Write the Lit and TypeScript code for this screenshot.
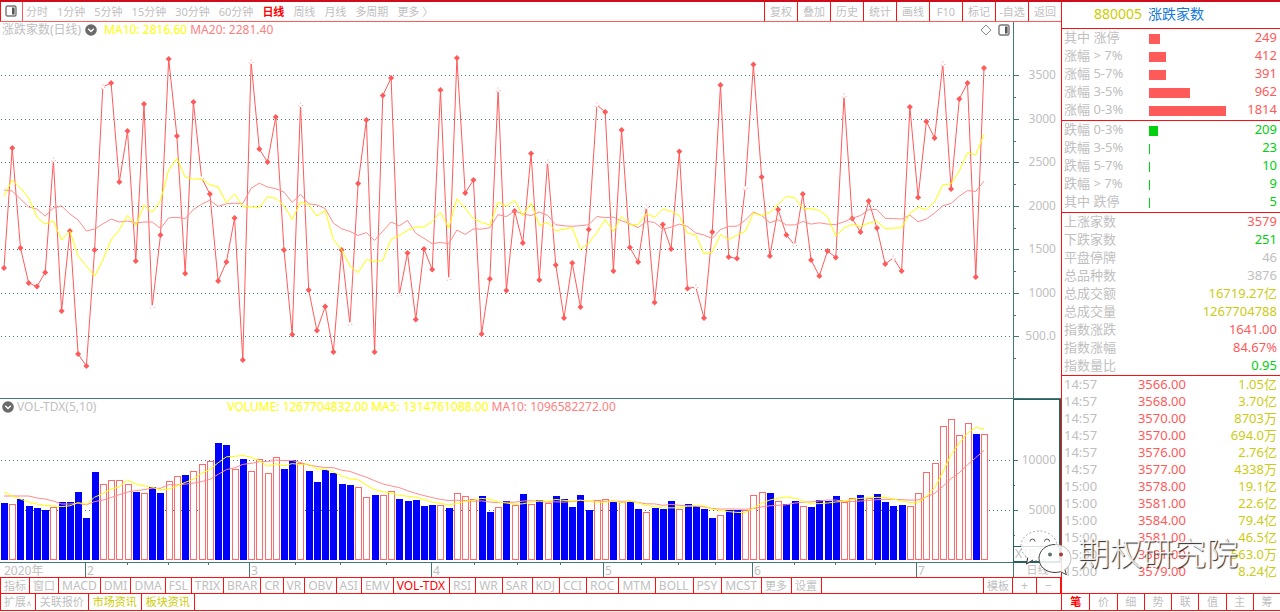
import { LitElement, html, svg, css } from "lit";
import { customElement, state } from "lit/decorators.js";
import { classMap } from "lit/directives/class-map.js";

const STEP = 980 / 119;
const px = (i: number) => 4 + i * STEP;

/* Closing positions of the advance/decline line, in plot units */
const LINE = [
  268, 148, 248, 283, 286.5, 272.5, 160, 311, 231, 354, 366, 250, 87, 83, 182, 131, 261, 104, 307, 235,
  59, 136, 273.5, 102, 178, 194, 281, 262, 218, 360, 62, 149, 162, 117, 250, 334.5, 105, 290, 330.5, 306.5,
  352, 250, 324, 183.5, 120, 352, 95.5, 78, 295, 253, 319.5, 249, 269.5, 90, 279, 58, 193, 180, 334, 279,
  90, 290.5, 211, 243, 153.5, 280, 162, 265, 318, 263, 307, 229.5, 105, 112, 271, 130, 247.5, 262, 207, 302.5,
  224.5, 249, 151.5, 288.5, 287, 318, 232, 85, 257, 258.5, 188, 64.5, 177, 256, 209.5, 235, 245, 194, 260, 276,
  251, 257.5, 96, 218.5, 232, 201, 228, 264, 258, 271, 107, 197.5, 121.5, 138, 64, 189, 99, 83, 277, 68,
];

/* Volume bars: top edge, r = rising day, b = falling day */
const VOLUME = (
  "503b 504r 499b 506b 508b 510b 507r 502b 502b 492b 518b 472b 484r 480r 480r 484r 492b 493r 487b 493b " +
  "481r 476r 475b 471r 464r 461r 443b 445b 469r 459b 471r 459r 473r 457r 469b 460b 463r 471b 482b 470b " +
  "473b 484b 485b 487r 497r 495b 495r 491r 499b 501b 500b 506b 505b 505r 508b 493r 496r 499r 496b 512b " +
  "507r 501b 505r 494b 504r 500b 503r 496b 499b 507b 495b 510b 500r 499r 502b 502r 502b 509b 512r 508b " +
  "509b 501b 509r 504b 506b 509b 518b 515r 510b 510b 510r 495r 492r 493b 501r 504b 501b 506r 507b 500b " +
  "501b 496b 502r 498r 495b 498r 494b 502b 506b 505b 506r 493r 472r 463r 426r 419r 435r 423r 434b 434r"
)
  .split(" ")
  .map((s) => ({ top: parseInt(s, 10), up: s.endsWith("r") }));

function average(data: number[], n: number, lead: number[]): string {
  return data
    .map((_, i) => {
      const y = i < n - 1 ? lead[i] : data.slice(i - n + 1, i + 1).reduce((a, b) => a + b, 0) / n;
      return `${px(i).toFixed(1)},${y.toFixed(1)}`;
    })
    .join(" ");
}

const MA10 = average(LINE, 10, [196, 180, 188, 198, 217, 224, 221, 240, 231]);
const MA20 = average(LINE, 20, [190, 191, 199, 207, 209, 216, 208, 206, 214, 220, 231, 229, 224, 219, 222, 221, 223, 222, 222]);
const TOPS = VOLUME.map((v) => v.top);
const VMA5 = average(TOPS, 5, [492, 496, 499, 502]);
const VMA10 = average(TOPS, 10, [496, 496, 496, 496, 498, 499, 501, 504, 504]);

const GRID = [75, 119, 162, 206, 249, 293, 336];
const GRID_LABELS = ["3500", "3000", "2500", "2000", "1500", "1000", "500.0"];
const MONTHS: [number, string][] = [[85, "2"], [249, "3"], [431, "4"], [603, "5"], [752, "6"], [916, "7"]];
const WEEKS = [127, 168, 208, 295, 340, 386, 474, 517, 560, 641, 678, 715, 794, 835, 875];

const PERIODS = ["分时", "1分钟", "5分钟", "15分钟", "30分钟", "60分钟", "日线", "周线", "月线", "多周期", "更多 〉"];
const ACTIONS = ["复权", "叠加", "历史", "统计", "画线", "F10", "标记", "-自选", "返回"];
const INDICATORS = [
  "指标", "窗口", "MACD", "DMI", "DMA", "FSL", "TRIX", "BRAR", "CR", "VR", "OBV", "ASI", "EMV",
];
const MORE_INDICATORS = ["VOL-TDX", "RSI", "WR", "SAR", "KDJ", "CCI", "ROC", "MTM", "BOLL", "PSY", "MCST", "更多", "设置"];
const RISES: [string, number][] = [["其中 涨停", 249], ["涨幅 > 7%", 412], ["涨幅 5-7%", 391], ["涨幅 3-5%", 962], ["涨幅 0-3%", 1814]];
const FALLS: [string, number][] = [["跌幅 0-3%", 209], ["跌幅 3-5%", 23], ["跌幅 5-7%", 10], ["跌幅 > 7%", 9], ["其中 跌停", 5]];
const SUMMARY = [
  ["上涨家数", "3579", "up"], ["下跌家数", "251", "down"], ["平盘停牌", "46", "flat"], ["总品种数", "3876", "flat"],
  ["总成交额", "16719.27亿", "amount"], ["总成交量", "1267704788", "amount"], ["指数涨跌", "1641.00", "up"],
  ["指数涨幅", "84.67%", "up"], ["指数量比", "0.95", "down"],
];
const TICKS = [
  ["14:57", "3566.00", "1.05亿"], ["14:57", "3568.00", "3.70亿"], ["14:57", "3570.00", "8703万"], ["14:57", "3570.00", "694.0万"],
  ["14:57", "3576.00", "2.76亿"], ["14:57", "3577.00", "4338万"], ["15:00", "3578.00", "19.1亿"], ["15:00", "3581.00", "22.6亿"],
  ["15:00", "3584.00", "79.4亿"], ["15:00", "3581.00", "46.5亿"], ["15:00", "3581.00", "563.0万"], ["15:00", "3579.00", "8.24亿"],
];
const SIDE_TABS = ["笔", "价", "细", "势", "联", "值", "主", "筹"];

const panelIcon = html`<svg width="12" height="12" viewBox="0 0 12 12" aria-hidden="true">
  <rect x="1" y="1" width="10" height="10" rx="1.5" fill="#fff" stroke="#777" stroke-width="1.4" />
  <rect x="7" y="2.5" width="2.6" height="7" fill="#555" />
</svg>`;

const foldIcon = html`<svg width="12" height="12" viewBox="0 0 12 12" aria-hidden="true">
  <circle cx="6" cy="6" r="5.8" fill="#6a6a6a" />
  <path d="M3.2 4.8 6 7.6 8.8 4.8" fill="none" stroke="#fff" stroke-width="1.4" />
</svg>`;

@customElement("app-root")
export class AppRoot extends LitElement {
  @state() private period = "日线";
  @state() private indicator = "VOL-TDX";
  @state() private sideTab = "笔";

  static styles = css`
    :host {
      display: block;
      background: #fff;
      color: #c0c0c0;
      font-family: "Noto Sans", "Noto Sans CJK SC", sans-serif;
      font-size: 12px;
      --red: #ff1010;
      --rise: #ff5a5a;
      --fall: #00d010;
      --teal: #447777;
    }
    * { box-sizing: border-box; }
    svg { display: block; }
    button {
      font: inherit;
      color: inherit;
      background: none;
      border: 0;
      margin: 0;
      padding: 0;
      white-space: nowrap;
      cursor: pointer;
    }
    .screen {
      position: relative;
      display: grid;
      grid-template-columns: minmax(0, 1fr) 219px;
      border-top: 2px solid #d00c1c;
    }
    .main { display: flex; flex-direction: column; min-width: 0; }

    .toolbar {
      display: flex;
      height: 20px;
      line-height: 18px;
      font-size: 11px;
      border-bottom: 1px solid var(--rise);
    }
    .toggle {
      width: 23px;
      display: flex;
      align-items: center;
      justify-content: center;
      padding: 0 2px 2px 0;
      border-left: 1px solid var(--red);
      border-right: 1px solid var(--rise);
    }
    .periods { display: flex; flex: 1; gap: 9px; padding-left: 3px; min-width: 0; overflow: hidden; }
    .actions { display: flex; }
    .actions button { width: 33px; border-left: 1px solid var(--red); }
    .selected { color: #ff0000; }
    .bold { font-weight: 700; }

    .panel { display: grid; grid-template-columns: minmax(0, 1fr) 48px; }
    .legend { display: flex; align-items: center; height: 16px; line-height: 16px; gap: 4px; padding-left: 2px; white-space: nowrap; }
    .legend-tools { display: flex; gap: 6px; margin-left: auto; padding-right: 3px; }
    .legend-vol { gap: 3px; }
    .readings { display: flex; gap: 3px; flex: 1; padding-left: 128px; }
    .readings-main { display: flex; gap: 3px; padding-left: 3px; }
    .yellow { color: #ffff00; }
    .pink { color: #ff8080; }
    .plot { width: 100%; height: 360px; }
    .plot-vol { width: 100%; height: 147px; }
    .axis { border-left: 1px solid var(--teal); }
    .volume { border-top: 1px solid var(--teal); }
    .volume-plot { border-bottom: 1px solid var(--teal); }
    .axis-vol { border: 1px solid #2a6060; border-width: 1px 2px 2px 1px; }
    .dates { height: 14px; }
    .date-scale { width: 100%; height: 14px; overflow: visible; }
    .unit { line-height: 14px; text-align: center; font-size: 11px; }
    text { font-size: 12px; fill: #c0c0c0; }

    .tabs {
      display: flex;
      height: 17px;
      line-height: 15px;
      border: solid var(--red);
      border-width: 1px 0 1px 1px;
    }
    .tabs button { padding: 0 3px; border-right: 1px solid var(--red); }
    .tabs .roomy { padding-right: 4px; }
    .tabs .cjk { font-size: 11px; }
    .tabs .template { margin-left: auto; border-left: 1px solid var(--red); font-size: 11px; }
    .tabs .zoom { width: 24px; }
    .links {
      display: flex;
      height: 17px;
      line-height: 16px;
      font-size: 11px;
      border-left: 1px solid var(--red);
      border-bottom: 1px solid var(--red);
    }
    .links button { padding: 0 4px; border-right: 1px solid var(--red); }
    .links .expand { padding: 0 3px; }
    .caret { font-family: "DejaVu Sans", sans-serif; font-size: 8px; }
    .olive { color: #cccc00; }

    .side { display: flex; flex-direction: column; border-left: 1px solid var(--red); font-size: 13px; }
    .heading {
      display: flex;
      gap: 6px;
      height: 27px;
      line-height: 24px;
      padding-left: 32px;
      font-size: 14px;
      font-weight: 400;
      margin: 0;
      border-bottom: 1px solid var(--red);
    }
    .code { color: #cccc00; }
    .name { color: #1478dc; }
    .group { border-bottom: 1px solid var(--red); }
    .spread { padding-bottom: 1px; }
    table { width: 100%; border-collapse: collapse; table-layout: fixed; line-height: 16px; }
    tr { height: 18px; }
    th, td { padding: 0; font-weight: 400; text-align: left; vertical-align: top; white-space: nowrap; }
    th { padding-left: 2px; }
    .num { text-align: right; padding-right: 3px; }
    .col-label { width: 87px; }
    .col-bar { width: 80px; }
    .bar { height: 10px; margin-top: 5px; background: currentColor; }
    .up { color: var(--rise); }
    .down { color: var(--fall); }
    .flat { color: #c0c0c0; }
    .amount { color: #cccc14; }
    .deals { line-height: 17px; }
    .deals tr { height: 17px; }
    .col-time { width: 50px; }
    .col-price { width: 77px; }
    .side-tabs {
      display: grid;
      grid-template-columns: repeat(8, 1fr);
      height: 18px;
      line-height: 16px;
      margin-top: auto;
      font-size: 11px;
      border-top: 1px solid var(--red);
      border-bottom: 1px solid var(--red);
    }
    .side-tabs button + button { border-left: 1px solid var(--red); }

    .watermark {
      position: absolute;
      right: 42px;
      bottom: 35px;
      display: flex;
      align-items: center;
      gap: 6px;
      pointer-events: none;
    }
    .watermark-text {
      font-size: 32px;
      font-weight: 300;
      line-height: 44px;
      color: rgba(255, 255, 255, 0.9);
      text-shadow: 1px 1px 1px #222;
    }
  `;

  private renderPlot() {
    return svg`
      ${GRID.map((y) => svg`<line x1="1" x2="1013" y1=${y + 0.5} y2=${y + 0.5} stroke="#447777" stroke-dasharray="1 3" />`)}
      <polyline points=${LINE.map((y, i) => `${px(i).toFixed(1)},${y}`).join(" ")} fill="none" stroke="#ff5a5a" />
      ${LINE.map((y, i) => {
        const x = px(i);
        return i > 0 && i % 6 === 0
          ? svg`<circle cx=${x} cy=${y} r="2" fill="#fff" stroke="#ff8a8a" stroke-dasharray="1 3" />`
          : svg`<path d="M${x - 3} ${y}L${x} ${y - 3}L${x + 3} ${y}L${x} ${y + 3}Z" fill="#ff5a5a" />`;
      })}
      <polyline points=${MA20} fill="none" stroke="#ff8c8c" />
      <polyline points=${MA10} fill="none" stroke="#ffff00" />
    `;
  }

  private renderVolume() {
    return svg`
      ${[460, 510].map((y) => svg`<line x1="1" x2="1013" y1=${y + 0.5} y2=${y + 0.5} stroke="#447777" stroke-dasharray="1 3" />`)}
      ${VOLUME.map(({ top, up }, i) => {
        const x = Math.round(px(i)) - 3;
        return up
          ? svg`<rect x=${x + 0.5} y=${top + 0.5} width="6" height=${559 - top} fill="#fff" stroke="#ff6a6a" />`
          : svg`<rect x=${x} y=${top} width="7" height=${560 - top} fill="#0000ff" />`;
      })}
      <polyline points=${VMA10} fill="none" stroke="#ff8c8c" />
      <polyline points=${VMA5} fill="none" stroke="#ffff00" />
    `;
  }

  private renderIndicator(t: string, roomy: boolean) {
    return html`<button
      class=${classMap({ cjk: t.charCodeAt(0) > 255, roomy, selected: t === this.indicator })}
      @click=${() => (this.indicator = t)}
    >${t}</button>`;
  }

  private renderSpread(rows: [string, number][], tone: string) {
    return html`<div class="group spread">
      <table>
        <colgroup><col class="col-label" /><col class="col-bar" /><col /></colgroup>
        <tbody>
          ${rows.map(
            ([label, n]) => html`<tr>
              <th scope="row">${label}</th>
              <td class=${tone}><div class="bar" style="width:${Math.max(1, Math.round((n * 77) / 1814))}px"></div></td>
              <td class="num ${tone}">${n}</td>
            </tr>`
          )}
        </tbody>
      </table>
    </div>`;
  }

  render() {
    return html`<div class="screen">
      <main class="main">
        <nav class="toolbar">
          <button class="toggle" aria-label="侧栏">${panelIcon}</button>
          <div class="periods">
            ${PERIODS.map(
              (p) => html`<button class=${classMap({ selected: p === this.period, bold: p === this.period })} @click=${() => (this.period = p)}>${p}</button>`
            )}
          </div>
          <div class="actions">${ACTIONS.map((a) => html`<button>${a}</button>`)}</div>
        </nav>

        <section class="panel">
          <div>
            <div class="legend">
              <span>涨跌家数(日线)</span>${foldIcon}
              <span class="readings-main"><span class="yellow">MA10: 2816.60</span><span class="pink">MA20: 2281.40</span></span>
              <span class="legend-tools">
                <svg width="12" height="12" viewBox="0 0 12 12" aria-hidden="true">
                  <path d="M6 1 11 6 6 11 1 6Z" fill="none" stroke="#888" />
                </svg>
                ${panelIcon}
              </span>
            </div>
            <svg class="plot" viewBox="0 38 1013 360" preserveAspectRatio="none">${this.renderPlot()}</svg>
          </div>
          <svg class="axis" width="48" height="376" viewBox="0 22 47 376">
            ${GRID.map(
              (y, i) => svg`<path d="M0 ${y + 0.5}h5M0 ${y + 22.5}h2" stroke="#447777" />
                <text x="42" y=${y + 4} text-anchor="end">${GRID_LABELS[i]}</text>`
            )}
          </svg>
        </section>

        <section class="panel volume">
          <div class="volume-plot">
            <div class="legend legend-vol">
              ${foldIcon}<span>VOL-TDX(5,10)</span>
              <span class="readings">
                <span class="yellow">VOLUME: 1267704832.00</span><span class="yellow">MA5: 1314761088.00</span
                ><span class="pink">MA10: 1096582272.00</span>
              </span>
            </div>
            <svg class="plot-vol" viewBox="0 415 1013 147" preserveAspectRatio="none">${this.renderVolume()}</svg>
          </div>
          <svg class="axis-vol" width="48" height="164" viewBox="1 400 45 161">
            <path d="M0 460.5h5M0 485.5h2M0 510.5h5M0 535.5h2" stroke="#447777" />
            <path d="M0 546.5h47" stroke="#2a6060" />
            <text x="43" y="464" text-anchor="end">10000</text>
            <text x="43" y="514" text-anchor="end">5000</text>
            <text x="2" y="558">X10万</text>
          </svg>
        </section>
        <div class="panel dates">
          <svg class="date-scale">
            ${WEEKS.map((x) => svg`<line x1="${(x + 0.5) / 10.13}%" x2="${(x + 0.5) / 10.13}%" y1="0" y2="2" stroke="#447777" />`)}
            ${MONTHS.map(
              ([x, m]) => svg`<line x1="${(x + 0.5) / 10.13}%" x2="${(x + 0.5) / 10.13}%" y1="0" y2="14" stroke="#447777" />
                <text x="${(x + 2) / 10.13}%" y="12">${m}</text>`
            )}
            <text x="4" y="12">2020年</text>
          </svg>
          <div class="axis unit">日线</div>
        </div>

        <nav class="tabs">
          ${INDICATORS.map((t) => this.renderIndicator(t, false))}
          ${MORE_INDICATORS.map((t) => this.renderIndicator(t, true))}
          <button class="template">模板</button><button class="zoom">+</button><button class="zoom">−</button>
        </nav>
        <nav class="links">
          <button class="expand">扩展<span class="caret">∧</span></button><button>关联报价</button
          ><button class="olive">市场资讯</button><button class="olive">板块资讯</button>
        </nav>
      </main>

      <aside class="side">
        <h1 class="heading"><span class="code">880005</span><span class="name">涨跌家数</span></h1>
        ${this.renderSpread(RISES, "up")} ${this.renderSpread(FALLS, "down")}
        <div class="group">
          <table>
            <tbody>
              ${SUMMARY.map(([k, v, tone]) => html`<tr><th scope="row">${k}</th><td class="num ${tone}">${v}</td></tr>`)}
            </tbody>
          </table>
        </div>
        <table class="deals">
          <colgroup><col class="col-time" /><col class="col-price" /><col /></colgroup>
          <tbody>
            ${TICKS.map(([t, p, v]) => html`<tr><th scope="row">${t}</th><td class="num up">${p}</td><td class="num amount">${v}</td></tr>`)}
          </tbody>
        </table>
        <nav class="side-tabs">
          ${SIDE_TABS.map(
            (t) => html`<button class=${classMap({ selected: t === this.sideTab, bold: t === this.sideTab })} @click=${() => (this.sideTab = t)}>${t}</button>`
          )}
        </nav>
      </aside>

      <div class="watermark">
        <svg width="52" height="46" viewBox="0 0 52 46" aria-hidden="true">
          <path d="M19 1C9 1 1 7.500 1 16c0 5 2.600 9 6.700 11.700L6.500 34l6.500-4c2 .6 4 .8 6 .8C29 30.800 37 24 37 16S29 1 19 1Z" fill="#fff" fill-opacity=".8" stroke="#999" stroke-width=".8" stroke-dasharray="2 2" />
          <path d="M7.700 27.700 6.500 34l6.500-4" fill="none" stroke="#333" />
          <path d="M10 11.500a2.500 2.500 0 0 1 5 0M24.500 11.500a2.500 2.500 0 0 1 5 0" fill="none" stroke="#555" />
          <path d="M35 14.500c-9 0-16 6-16 14s7 14 16 14c2 0 4-.3 5.600-.8l5.800 3-1.500-5.200c3.800-2.600 6.100-6.600 6.100-11 0-8-7-14-16-14Z" fill="#fff" fill-opacity=".86" />
          <path d="M35 14.500c-9 0-16 6-16 14s7 14 16 14c2 0 4-.3 5.600-.8l5.800 3-1.500-5.200" fill="none" stroke="#444" />
          <path d="M44.900 39.500c3.800-2.600 6.100-6.600 6.100-11 0-8-7-14-16-14" fill="none" stroke="#aaa" stroke-width=".8" />
          <circle cx="30" cy="24.500" r="2" fill="#5a7777" /><circle cx="41" cy="24.500" r="2" fill="#a03a3a" />
        </svg>
        <span class="watermark-text">期权研究院</span>
      </div>
    </div>`;
  }
}
